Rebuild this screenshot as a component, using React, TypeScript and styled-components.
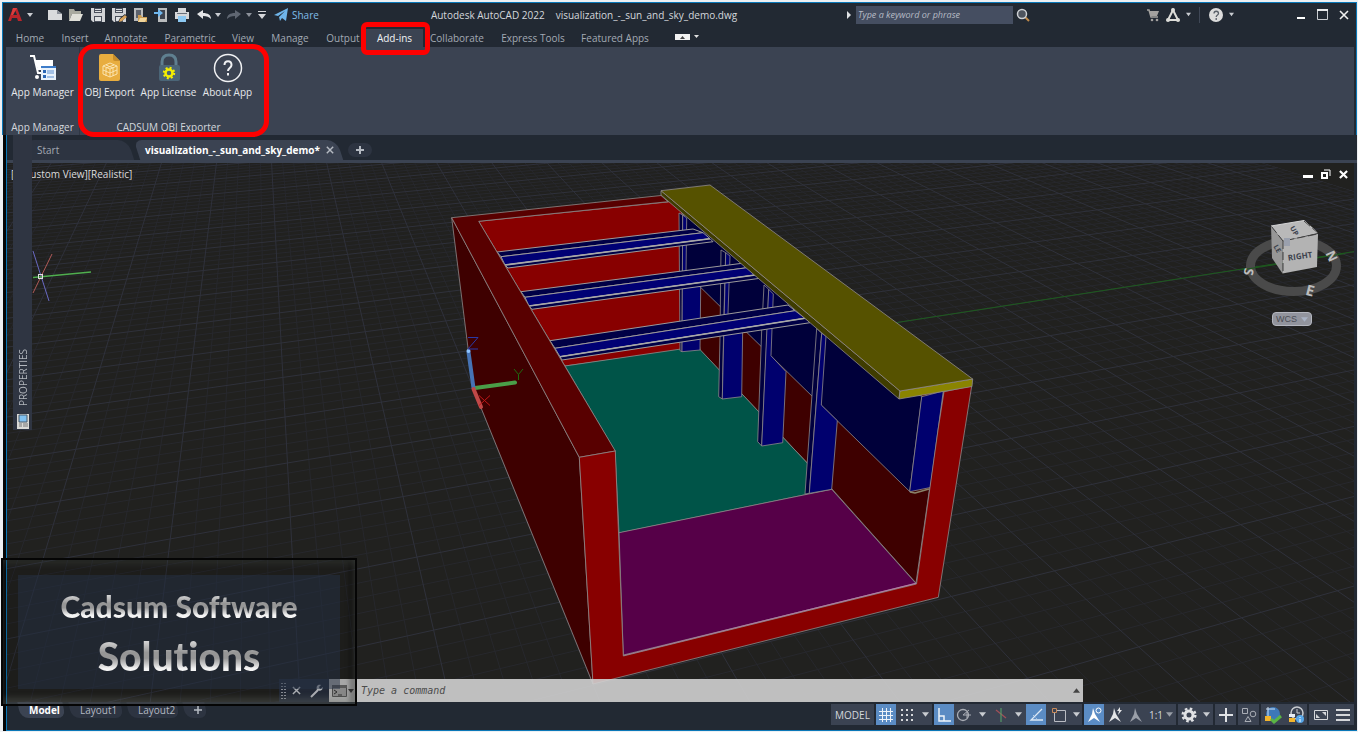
import React from "react";
import styled, { createGlobalStyle, css } from "styled-components";

const GlobalStyle = createGlobalStyle`
  * { box-sizing: border-box; }
  body { margin: 0; background: #fff; }
  button, input { font: inherit; color: inherit; margin: 0; }
`;

const c = {
  dark: "#222933",
  panel: "#3b4352",
  tab: "#2d3441",
  text: "#d4d7dc",
  dim: "#a3a9b3",
  blue: "#0a78b8",
  active: "#5b8cc4",
};

const Page = styled.div`
  position: relative;
  min-height: 100vh;
  display: flex;
  flex-direction: column;
  padding: 2px 1px 1px 2px;
  background: #eef0f3;
  color: ${c.text};
  font: 10px/16px "Open Sans", "Noto Sans", sans-serif;
`;

const Ribbon = styled.header`
  background: ${c.dark};
  border: 1px solid ${c.blue};
  border-bottom: 0;
`;

const TitleBar = styled.div`
  display: flex;
  align-items: center;
  height: 23px;
`;

const QuickAccess = styled.div`
  display: flex;
  align-items: center;
  width: 319px;
`;

const IconButton = styled.button<{ $w?: number; $ml?: number }>`
  display: flex;
  align-items: center;
  justify-content: center;
  flex: none;
  width: ${(p) => p.$w ?? 21}px;
  height: 20px;
  margin-left: ${(p) => p.$ml ?? 0}px;
  padding: 0;
  border: 0;
  background: none;
`;

const ShareButton = styled.button`
  display: flex;
  align-items: center;
  gap: 3px;
  margin-left: 2px;
  padding: 0;
  border: 0;
  background: none;
  color: #7fbce8;
`;

const Title = styled.h1`
  display: flex;
  justify-content: center;
  gap: 11px;
  flex: 1;
  margin: 0;
  font-size: 10px;
  font-weight: 400;
  white-space: nowrap;
`;

const TitleTools = styled.div`
  display: flex;
  align-items: center;
  flex: none;
  margin-right: 2px;
`;

const Search = styled.input`
  width: 157px;
  height: 18px;
  margin-left: 4px;
  padding: 0 2px;
  border: 0;
  border-radius: 0;
  background: #454e61;
  font-size: 9px;
  font-style: italic;
  &::placeholder { color: #b6bbc5; opacity: 1; }
`;

const Divider = styled.span`
  width: 1px;
  height: 16px;
  margin: 0 6px;
  background: #3f4756;
`;

const RibbonTabs = styled.nav`
  display: flex;
  align-items: flex-end;
  height: 21px;
  padding-left: 5px;
`;

const RibbonTab = styled.button<{ $w: number; $active?: boolean }>`
  width: ${(p) => p.$w}px;
  height: 18px;
  padding: 0;
  border: 0;
  white-space: nowrap;
  position: relative;
  background: ${(p) => (p.$active ? c.panel : "none")};
  color: ${(p) => (p.$active ? "#f1f3f5" : c.dim)};
`;

const Highlight = styled.span<{ $r: number; $inset: string }>`
  position: absolute;
  z-index: 6;
  inset: ${(p) => p.$inset};
  border: 5px solid #fe0000;
  border-radius: ${(p) => p.$r}px;
  pointer-events: none;
`;

const Panels = styled.div`
  display: flex;
  height: 88px;
  margin: 0 2px 0 3px;
  background: ${c.panel};
`;

const Panel = styled.section`
  position: relative;
  display: flex;
  flex-direction: column;
  justify-content: space-between;
  padding: 6px 0 0;
  border-right: 1px solid #303744;
  &:last-child { border-right: 0; }
`;

const PanelRow = styled.div`
  display: flex;
`;

const PanelTitle = styled.h2`
  margin: 0;
  font-size: 10px;
  font-weight: 400;
  text-align: center;
  white-space: nowrap;
`;

const BigButton = styled.button<{ $w: number }>`
  display: flex;
  flex-direction: column;
  align-items: center;
  gap: 1px;
  width: ${(p) => p.$w}px;
  padding: 0;
  border: 0;
  background: none;
  white-space: nowrap;
  color: #e6e8eb;
`;

const Main = styled.main`
  position: relative;
  display: flex;
  flex-direction: column;
  flex: 1;
  margin-left: 1px;
  border-left: 3px solid #050607;
  background: ${c.dark};
`;

const Frame = styled.div`
  display: flex;
  flex-direction: column;
  flex: 1;
  border-left: 1px solid ${c.blue};
  border-bottom: 1px solid ${c.blue};
`;

const FileTabs = styled.div`
  display: flex;
  align-items: flex-end;
  height: 28px;
  padding-left: 22px;
  border-bottom: 3px solid ${c.panel};
`;

const slant = css`
  position: relative;
  z-index: 0;
  border: 0;
  background: none;
  text-align: left;
  white-space: nowrap;
  &::before {
    content: "";
    position: absolute;
    z-index: -1;
    inset: 0 6px 0 0;
  }
`;

const FileTab = styled.button<{ $active?: boolean; $w: number }>`
  ${slant}
  display: flex;
  align-items: center;
  justify-content: space-between;
  width: ${(p) => p.$w}px;
  height: 20px;
  padding: 0 12px 0 8px;
  color: ${(p) => (p.$active ? "#fff" : c.dim)};
  font-weight: ${(p) => (p.$active ? 700 : 400)};
  &::before {
    background: ${(p) => (p.$active ? c.panel : c.tab)};
    border-radius: 8px 10px 0 0;
    transform: skewX(18deg);
  }
`;

const PlusTab = styled.button`
  width: 24px;
  height: 14px;
  margin: 0 0 3px 2px;
  padding: 0;
  border: 0;
  border-radius: 7px;
  background: ${c.tab};
  display: grid;
  place-items: center;
`;

const Viewport = styled.section`
  position: relative;
  display: flex;
  flex-direction: column;
  justify-content: space-between;
  flex: 1;
  margin-right: 3px;
  background: #21211f;
  overflow: hidden;
`;

const Scene = styled.svg`
  position: absolute;
  inset: 0;
  width: 100%;
  height: 100%;
`;

const ViewHeader = styled.div`
  position: relative;
  display: flex;
  justify-content: space-between;
  align-items: center;
  height: 22px;
  padding: 0 3px 0 4px;
`;

const ViewLabel = styled.span`
  color: #dcdcdc;
`;

const WindowButtons = styled.div`
  display: flex;
`;

const ViewCube = styled.svg`
  position: absolute;
  top: 48px;
  right: 5px;
`;

const WcsButton = styled.button`
  position: absolute;
  top: 149px;
  right: 42px;
  width: 40px;
  height: 14px;
  display: flex;
  align-items: center;
  justify-content: space-between;
  padding: 0 3px;
  border: 1px solid #b4b6be;
  border-radius: 4px;
  background: #92949d;
  color: #4b4d55;
  font: 9px/12px "Liberation Sans", sans-serif;
`;

const CommandLine = styled.div`
  position: relative;
  display: flex;
  height: 23px;
  margin: 0 271px 0 272px;
`;

const CommandTools = styled.div`
  display: flex;
  align-items: center;
  width: 50px;
  background: #272e3d;
`;

const CommandField = styled.label`
  display: flex;
  align-items: center;
  flex: 1;
  padding: 0 3px 0 2px;
  background: rgba(208, 208, 208, 0.9);
`;

const CommandInput = styled.input`
  flex: 1;
  min-width: 0;
  margin-left: 6px;
  padding: 0;
  border: 0;
  background: none;
  font: italic 10px/16px "DejaVu Sans Mono", monospace;
  &::placeholder { color: #4c4c4c; opacity: 1; }
`;

const Footer = styled.footer`
  display: flex;
  justify-content: space-between;
  height: 28px;
`;

const LayoutTabs = styled.div`
  display: flex;
  padding-left: 12px;
`;

const LayoutTab = styled.button<{ $active?: boolean; $w: number }>`
  ${slant}
  width: ${(p) => p.$w}px;
  height: 16px;
  padding: 0 0 0 10px;
  line-height: 16px;
  color: ${(p) => (p.$active ? "#fff" : "#b3b8c1")};
  font-weight: ${(p) => (p.$active ? 700 : 400)};
  &::before {
    background: ${(p) => (p.$active ? c.panel : c.tab)};
    border-radius: 0 0 8px 8px;
    transform: skewX(12deg);
  }
`;

const StatusBar = styled.div`
  display: flex;
  gap: 2px;
  height: 21px;
  margin: 2px 3px 0 0;
`;

const StatusGroup = styled.div`
  display: flex;
  background: ${c.panel};
`;

const StatusButton = styled.button<{ $w: number; $on?: boolean }>`
  display: flex;
  align-items: center;
  justify-content: center;
  gap: 3px;
  width: ${(p) => p.$w}px;
  padding: 0;
  border: 0;
  background: ${(p) => (p.$on ? c.active : "none")};
  white-space: nowrap;
`;

const Palette = styled.aside`
  position: absolute;
  z-index: 3;
  top: 0;
  left: 7px;
  width: 19px;
  height: 295px;
  display: flex;
  flex-direction: column;
  align-items: center;
  justify-content: flex-end;
  gap: 8px;
  background: #2f3542;
`;

const PaletteTitle = styled.span`
  writing-mode: vertical-rl;
  rotate: 180deg;
  line-height: 14px;
  color: #b3b7be;
`;

const Plaque = styled.div`
  position: absolute;
  z-index: 5;
  left: 1px;
  bottom: 26px;
  width: 356px;
  height: 148px;
  padding: 15px;
  border: 2px solid #050505;
  background: rgba(0, 0, 0, 0.12);
  box-shadow: inset 0 6px 6px -2px rgba(110, 125, 120, 0.16),
    inset 0 -6px 6px rgba(120, 125, 120, 0.3), inset -6px 0 4px rgba(0, 0, 0, 0.25);
  pointer-events: none;
`;

const PlaqueFace = styled.div`
  display: flex;
  flex-direction: column;
  align-items: center;
  height: 100%;
  padding-top: 10px;
  background: rgba(38, 50, 70, 0.5);
`;

const PlaqueText = styled.span<{ $size: number; $lh: number }>`
  font: 900 ${(p) => p.$size}px / ${(p) => p.$lh}px Lato, sans-serif;
  font-variant-ligatures: none;
  white-space: nowrap;
  background: linear-gradient(#d6d6d6 24%, #969696 44%, #969696 54%, #f4f4f4 72%);
  background-clip: text;
  -webkit-background-clip: text;
  color: transparent;
`;

const Caret = ({ size = 6, color = "#c9ccd1", up = false }: { size?: number; color?: string; up?: boolean }) => (
  <svg width={size} height={size} viewBox="0 0 6 6" aria-hidden="true">
    <path d={up ? "M0 5h6L3 1z" : "M0 1h6L3 5z"} fill={color} />
  </svg>
);

const Ico = ({ w = 16, h = 16, children }: { w?: number; h?: number; children: React.ReactNode }) => (
  <svg width={w} height={h} viewBox={`0 0 ${w} ${h}`} fill="none" aria-hidden="true">
    {children}
  </svg>
);

const Cross = ({ color = "#fff", w = 2, size = 10 }: { color?: string; w?: number; size?: number }) => (
  <svg width={size} height={size} viewBox="0 0 10 10" aria-hidden="true">
    <path d="M1 1l8 8M9 1l-8 8" stroke={color} strokeWidth={w} />
  </svg>
);

/* ---- perspective floor grid ---- */
const VA = { x: 3958, y: -150 };
const VB = { x: 255, y: -150 };

const gridLines = () => {
  const major: string[] = [];
  const minor: string[] = [];
  for (let i = -45; i <= 81; i++) {
    const k = 0.405 + (0.176 * i) / 5;
    const d = `M${(VB.x + k * 300).toFixed(1)} 150L${(VB.x + k * 880).toFixed(1)} 730`;
    (i % 5 === 0 ? major : minor).push(d);
  }
  for (let j = -80; j <= 50; j++) {
    const m = -6.478 + (0.49 * j) / 5;
    const at = (x: number) => (VA.y + (x - VA.x) / m).toFixed(1);
    (j % 5 === 0 ? major : minor).push(`M0 ${at(0)}L1358 ${at(1358)}`);
  }
  return { major: major.join(""), minor: minor.join("") };
};
const grid = gridLines();

const columns = [
  ["679,213 682.7,215 682,351.7 680,350.7", "682.7,215 686.7,218 686,274 700.7,287.7 700,350 682,351.7"],
  ["721,250 725.7,252.7 724,313 722.3,399 718.7,396.7 720,337", "725.7,252.7 730,256 728,313.3 742.7,328.3 741.7,396.7 722.3,399"],
  ["764,285 768.7,289.3 767.3,330 761.7,446 757.7,441.7 761.7,330", "768.7,289.3 773.3,294 771,355.7 786,371.7 782.7,442.7 761.7,446"],
  ["816.7,328.3 821.7,333.3 809.3,493.3 805,494", "821.7,333.3 826,336 821.3,405 837.3,420.7 831.7,489.3 809.3,493.3"],
];

const beams = [
  [497, 252, 693, 229, 501, 256.7, 703, 232.7, 505, 265, 710, 238.7, 508, 268, 713, 241.7],
  [521, 291.7, 742, 263.3, 525, 297.3, 747, 267.7, 529, 306, 755, 275, 532, 309.3, 760, 278.3],
  [550, 340.7, 788, 305, 555, 348.3, 795, 310.7, 560, 356.7, 805, 318.3, 562, 360, 810, 322.7],
];

const Drawing = () => (
  <Scene viewBox="7 163 1347 539" preserveAspectRatio="xMidYMid slice" role="img" aria-label="3D model of a building">
    <clipPath id="gridEdge">
      <path d="M-10 0H738L3095 732H-10z" />
    </clipPath>
    <g clipPath="url(#gridEdge)" fill="none">
      <path d={grid.minor} stroke="#27282d" />
      <path d={grid.major} stroke="#2f313b" />
    </g>
    <path d="M897 322.500L1358 251" stroke="#1d5a1d" />

    <g stroke="#8f8a8a" strokeWidth="0.8" strokeLinejoin="round">
      <polygon points="478.7,221.3 682,200.500 682,350 565,366" fill="#880000" />
      <polygon points="682,205 944,390 938,430 916,583 832,489 700,350" fill="#3e0000" />
      <polygon points="565,366 681,349 700,349.500 832,489.300 619,533 615,451" fill="#005448" />
      <polygon points="619,532.700 831.700,489.300 916,583.500 623.300,655" fill="#560048" />
      <path d="M623.300 656L916 583.500" stroke="#b878a8" strokeWidth="1.600" />
      <polygon points="684,210 900,392 922,396 909.700,491.500 701,287.700 684,271" fill="#00003a" />
      <polygon points="921.700,396.700 943.300,391 930.300,487.500 909.700,491.700" fill="#00006e" />
      <path d="M910 492l5 1 14-4" fill="none" stroke="#8a8268" strokeWidth="1.600" />
      {columns.map(([side, face]) => (
        <g key={side}>
          <polygon points={side} fill="#00003e" />
          <polygon points={face} fill="#00006e" />
        </g>
      ))}
      {beams.map((b) => (
        <g key={b[0]} stroke="#9c9a9a" strokeWidth="1">
          <polygon points={`${b[0]},${b[1]} ${b[2]},${b[3]} ${b[6]},${b[7]} ${b[4]},${b[5]}`} fill="#000046" />
          <polygon points={`${b[4]},${b[5]} ${b[6]},${b[7]} ${b[10]},${b[11]} ${b[8]},${b[9]}`} fill="#000074" />
          <polygon points={`${b[8]},${b[9]} ${b[10]},${b[11]} ${b[14]},${b[15]} ${b[12]},${b[13]}`} fill="#000046" />
          <path d={`M${b[8]} ${b[9]}L${b[10]} ${b[11]}`} stroke="#a8a8a8" strokeWidth="1.600" />
        </g>
      ))}
      <polygon points="451.700,217.700 579.300,457.300 593,684 473,388" fill="#3e0000" />
      <polygon points="451.700,217.700 661,195.500 668,201.700 478.700,221.300 615.300,451 579.300,457.300" fill="#580000" />
      <polygon
        points="579.300,457.300 615.300,451 623.300,656 916.500,584 938,430 944,391.700 971.700,386 938.300,597.300 593,684"
        fill="#880000"
      />
      <polygon points="661,190.700 900,391 899,399 661,195" fill="#3f3c00" />
      <polygon points="900,391 972.700,379 972,386.500 899,399" fill="#8a8400" />
      <polygon points="661,190.700 710,185 972.700,379 900,391" fill="#565200" />
    </g>

    <g strokeLinecap="round" strokeWidth="4">
      <path d="M475 388L515 382.500" stroke="#4a9e48" />
      <path d="M473.500 388L468.500 352" stroke="#4673b4" />
      <path d="M473.500 389L481 407" stroke="#c04848" />
    </g>
    <circle cx="468.500" cy="351" r="2" fill="#8ec4ff" />
    <g fill="none">
      <path d="M468 337.500h10l-10 11.500h10" stroke="#2a3aa8" />
      <path d="M514 369l4.500 5.500 4.500-5.500M518.500 374.500v5.500" stroke="#1f6a10" />
      <path d="M479 395.500l11 10M490 395.500l-11 10" stroke="#c01818" />
      <path d="M33 293L52 254" stroke="#b05a58" />
      <path d="M33 251l16 50" stroke="#6a6ac4" />
      <path d="M33 277.500L91 272" stroke="#4fae4f" strokeWidth="1.400" />
      <rect x="38.500" y="274.500" width="4" height="4" stroke="#dedede" />
    </g>
  </Scene>
);

const Cube = () => (
  <ViewCube width="112" height="100" viewBox="-4 0 112 100" aria-label="View cube">
    <g transform="translate(-1241 -210)">
      <ellipse cx="1293.500" cy="265" rx="43" ry="25.500" fill="none" stroke="#4a4a4a" strokeWidth="9" />
      <path d="M1241 269L1345 252.500" stroke="#1d5a1d" />
      <polygon points="1271,225 1304,219.500 1318,232 1283,240" fill="#b9b9b9" />
      <polygon points="1271,225 1283,240 1282.500,272.500 1272,257" fill="#979797" />
      <polygon points="1283,240 1318,233 1317,266 1282.500,272.500" fill="#b3b3b3" />
      <path d="M1271 225l33-5.500 14 12.500" fill="none" stroke="#d5d5d5" />
      <path d="M1271.500 225.500L1283 240l34.500-7M1283 240v32M1304 220l14 12" fill="none" stroke="#404040" strokeDasharray="8 3" />
      <rect x="1284" y="237" width="6" height="8" fill="#9aa0ad" />
      <g fill="#3d434e" fontFamily="Open Sans, sans-serif" fontWeight="700" textAnchor="middle">
        <text x="1300" y="258" fontSize="8" transform="rotate(-8 1300 255)">RIGHT</text>
        <text x="1294" y="232" fontSize="7" transform="rotate(60 1294 230)">UP</text>
        <text x="1277" y="250" fontSize="7" transform="rotate(60 1277 248)">LE</text>
      </g>
      <g fill="#bdbdbd" fontFamily="Open Sans, sans-serif" fontWeight="700" textAnchor="middle">
        <text x="1249" y="276" fontSize="13" transform="rotate(100 1249 271)">S</text>
        <text x="1310" y="295" fontSize="15" transform="rotate(14 1310 290)">E</text>
        <text x="1332" y="260" fontSize="13" transform="rotate(65 1332 255)">N</text>
      </g>
    </g>
  </ViewCube>
);

const floppy = (
  <>
    <path d="M1 1h14v14H3l-2-2z" fill="#d2d4d7" />
    <path d="M4 1h8v5H4zM4 9h8v6H4z" fill="#4a505c" />
    <path d="M5 2h6v1H5zM5 4h6v1H5zM5 10h6v4H5z" fill="#dfe1e3" />
  </>
);

const ribbonTabs: [string, number][] = [
  ["Home", 44], ["Insert", 46], ["Annotate", 56], ["Parametric", 72], ["View", 34], ["Manage", 60],
  ["Output", 46], ["Add-ins", 57], ["Collaborate", 68], ["Express Tools", 84], ["Featured Apps", 80],
];

const person = (fill: string, extra?: React.ReactNode) => (
  <Ico>
    <path d="M7 1l2 6 5 8-6-4-6 4 4-8z" fill={fill} />
    {extra}
  </Ico>
);

export default function App() {
  return (
    <Page>
      <GlobalStyle />
      <Ribbon>
        <TitleBar>
          <QuickAccess>
            <IconButton $w={24} aria-label="Application menu">
              <Ico><path d="M1 14L6 1h4l5 13h-4l-1-3H5l-1 3zM6 8h4L8 3z" fill="#b9252b" /><path d="M6 1h4L6 8H4z" fill="#dc3c3c" /></Ico>
            </IconButton>
            <Caret />
            <IconButton $ml={11} aria-label="New">
              <Ico><path d="M1 3h9l5 4v6H1z" fill="#d9dbdd" /><path d="M10 3v4h5z" fill="#8b9099" /></Ico>
            </IconButton>
            <IconButton $w={22} aria-label="Open">
              <Ico><path d="M1 14V2h5l1 2h6v3H4z" fill="#a9aa9f" /><path d="M4 7h11l-3 7H1z" fill="#e0e0d8" /></Ico>
            </IconButton>
            <IconButton aria-label="Save"><Ico>{floppy}</Ico></IconButton>
            <IconButton aria-label="Save as">
              <Ico>{floppy}<path d="M7 15l2-4 5-4 2 2-5 5z" fill={c.dark} /><path d="M8 15l1-3 5-4 2 2-5 4z" fill="#d9a45c" /></Ico>
            </IconButton>
            <IconButton $w={22} aria-label="Open from web">
              <Ico><path d="M2 1h9v13H2z" fill="#b9bbbd" /><path d="M4 3h5v8H4z" fill="#5b616c" /><path d="M6 15V8h3l1 2h5v5z" fill="#c99a52" /><path d="M8 11h7l-2 4H6z" fill="#f0d49a" /></Ico>
            </IconButton>
            <IconButton $w={20} aria-label="Save to mobile">
              <Ico><path d="M5 1h9v14H5z" fill="#b9bbbd" /><path d="M7 3h5v9H7z" fill="#3c4350" /><path d="M1 5h4V2l5 4-5 4V7H1z" fill="#6fb7ee" /></Ico>
            </IconButton>
            <IconButton $w={22} aria-label="Plot">
              <Ico><path d="M4 1h8v4H4zM1 5h14v7H1z" fill="#d5d7da" /><path d="M3 6h10v1H3z" fill="#6b717c" /><path d="M4 9h8v6H4z" fill="#8cc8f2" /></Ico>
            </IconButton>
            <IconButton $w={22} aria-label="Undo">
              <Ico><path d="M1 7l6-4v3c5 0 8 2 8 6-2-2-4-3-8-3v3z" fill="#e4e5e7" /></Ico>
            </IconButton>
            <Caret />
            <IconButton $w={25} aria-label="Redo">
              <Ico><path d="M15 7L9 3v3c-5 0-8 2-8 6 2-2 4-3 8-3v3z" fill="#5f6672" /></Ico>
            </IconButton>
            <Caret color="#8d929b" />
            <IconButton $w={20} aria-label="Customize">
              <Ico w={8} h={8}><path d="M0 0h8v1H0zM0 3h8L4 8z" fill="#d5d7da" /></Ico>
            </IconButton>
            <ShareButton>
              <Ico w={15}><path d="M0 8L14 1l-2 13-4-3-2 3-1-4 6-6-7 5z" fill="#6fb5ea" /></Ico>
              Share
            </ShareButton>
          </QuickAccess>
          <Title><span>Autodesk AutoCAD 2022</span><span>visualization_-_sun_and_sky_demo.dwg</span></Title>
          <TitleTools>
            <Ico w={6} h={8}><path d="M1 0v8l4-4z" fill="#e0e2e5" /></Ico>
            <Search placeholder="Type a keyword or phrase" aria-label="Search" />
            <IconButton $w={20} aria-label="Find">
              <Ico><path d="M10 10l4 4" stroke="#c08a4a" strokeWidth="2" /><circle cx="7" cy="7" r="4.500" stroke="#cdd0d4" strokeWidth="1.500" fill="#4e545e" /></Ico>
            </IconButton>
            <IconButton $ml={110} $w={20} aria-label="App store">
              <Ico><path d="M2 3h2l2 7h7" stroke="#a3a19f" strokeWidth="1.500" /><path d="M4 4h10l-2 5H6z" fill="#a3a19f" /><circle cx="7" cy="13" r="1.300" fill="#a3a19f" /><circle cx="12" cy="13" r="1.300" fill="#a3a19f" /></Ico>
            </IconButton>
            <IconButton $w={20} aria-label="Autodesk account">
              <Ico><path d="M8 3L3 13h10z" stroke="#dcdcd8" strokeWidth="2" /><circle cx="8" cy="3" r="2" fill="#dcdcd8" /><circle cx="3" cy="13" r="2" fill="#dcdcd8" /><circle cx="13" cy="13" r="2" fill="#dcdcd8" /></Ico>
            </IconButton>
            <IconButton $w={10} aria-label="Account menu"><Caret size={5} /></IconButton>
            <Divider />
            <IconButton $w={20} aria-label="Help">
              <Ico><circle cx="8" cy="8" r="7" fill="#dcdcdc" /><path d="M6 6.500c0-3 4.500-3 4.500 0 0 1.500-2.300 1.500-2.300 3.500M8.200 11v2" stroke="#5a6069" strokeWidth="1.300" /></Ico>
            </IconButton>
            <IconButton $w={11} aria-label="Help menu"><Caret size={5} /></IconButton>
            <IconButton $ml={53} aria-label="Minimize"><Ico><path d="M4 10h8v2H4z" fill="#fff" /></Ico></IconButton>
            <IconButton $w={22} aria-label="Maximize"><Ico><path d="M3.500 3.500h10v9h-10z" stroke="#c9ccd1" /><path d="M3 2h11v2H3z" fill="#e8eaec" /></Ico></IconButton>
            <IconButton aria-label="Close"><Cross w={1.6} color="#f0f0f0" /></IconButton>
          </TitleTools>
        </TitleBar>
        <RibbonTabs>
          {ribbonTabs.map(([label, w]) => (
            <RibbonTab key={label} $w={w} $active={label === "Add-ins"}>
              {label}
              {label === "Add-ins" && <Highlight $r={6} $inset="-7px -7px -8px -5px" />}
            </RibbonTab>
          ))}
          <IconButton $ml={15} $w={33} aria-label="Ribbon display">
            <Ico w={24} h={8}><path d="M0 1h15v6H0z" fill="#f2f2f2" /><path d="M5 6h5L7.500 3z" fill="#444" /><path d="M19 2h5l-2.500 3z" fill="#e0e0e0" /></Ico>
          </IconButton>
        </RibbonTabs>
        <Panels>
          <Panel>
            <BigButton $w={73}>
              <Ico w={30} h={30}>
                <path d="M2 3h4l4 17h8" stroke="#fff" strokeWidth="2" />
                <path d="M7 7h18v10H10z" fill="#fff" /><circle cx="9" cy="24" r="2" fill="#fff" />
                <path d="M13 13h15v14H13z" fill="#3d7cc9" /><path d="M13 15h15v12H13z" fill="#e9f2fb" />
                <path d="M15 17h3v3h-3zM15 22h3v3h-3z" fill="#2b66b4" /><path d="M19 18h7M19 20h7M19 24h7" stroke="#5c8fd0" />
              </Ico>
              App Manager
            </BigButton>
            <PanelTitle>App Manager</PanelTitle>
          </Panel>
          <Panel>
            <PanelRow>
              <BigButton $w={59}>
                <Ico w={30} h={30}>
                  <path d="M4 3q0-2 2-2h12l7 7v18q0 2-2 2H6q-2 0-2-2z" fill="#e8ad3f" /><path d="M18 1v5q0 2 2 2h5z" fill="#c78d2b" />
                  <path d="M15 10l7 3v8l-7 3-7-3v-8zM8 13l7 3 7-3M15 16v8M11 12l7 3v8M19 12l-8 3v8M8 17l7 3 7-3" stroke="#fbe3ae" strokeWidth="1" />
                </Ico>
                OBJ Export
              </BigButton>
              <BigButton $w={59}>
                <Ico w={30} h={30}>
                  <path d="M8 14V9q0-7 7-7t7 7v5" stroke="#5f7f90" strokeWidth="3" /><rect x="5" y="12" width="21" height="16" rx="2" fill="#4b6577" />
                  <circle cx="15" cy="20" r="3.500" stroke="#f6f000" strokeWidth="2.500" />
                  <circle cx="15" cy="20" r="5.200" stroke="#f6f000" strokeWidth="2" strokeDasharray="2 2.080" />
                </Ico>
                App License
              </BigButton>
              <BigButton $w={59}>
                <Ico w={30} h={30}>
                  <circle cx="15" cy="15" r="13.500" stroke="#f0f1f3" strokeWidth="1.500" />
                  <path d="M11.500 12c0-5 7-5 7 0 0 3-3.500 3-3.500 6M15 20v2.500" stroke="#f0f1f3" strokeWidth="2" />
                </Ico>
                About App
              </BigButton>
            </PanelRow>
            <PanelTitle>CADSUM OBJ Exporter</PanelTitle>
            <Highlight $r={16} $inset="-3px -12px -2px -2px" />
          </Panel>
        </Panels>
      </Ribbon>

      <Main>
        <Frame>
          <FileTabs>
            <FileTab $w={108}>Start</FileTab>
            <FileTab $active $w={209}>visualization_-_sun_and_sky_demo*<Cross size={8} w={1.8} color="#b5bac2" /></FileTab>
            <PlusTab aria-label="New tab"><Ico w={8} h={8}><path d="M4 0v8M0 4h8" stroke="#b5bac2" strokeWidth="2" /></Ico></PlusTab>
          </FileTabs>
          <Viewport>
            <Drawing />
            <ViewHeader>
              <ViewLabel>[-][Custom View][Realistic]</ViewLabel>
              <WindowButtons>
                <IconButton $w={18} aria-label="Minimize drawing"><Ico w={10} h={10}><path d="M0 6h10v3H0z" fill="#fff" /></Ico></IconButton>
                <IconButton $w={18} aria-label="Restore drawing"><Ico w={10} h={10}><path d="M1 4h5v5H1z" stroke="#fff" strokeWidth="2" /><path d="M3 1h6v6" stroke="#fff" /></Ico></IconButton>
                <IconButton $w={16} aria-label="Close drawing"><Cross size={9} w={2.4} /></IconButton>
              </WindowButtons>
            </ViewHeader>
            <Cube />
            <WcsButton>WCS<Caret size={7} color="#a9b2c4" /></WcsButton>
            <CommandLine>
              <CommandTools>
                <IconButton $w={10} aria-label="Move"><Ico w={6} h={16}><path d="M1 0v16M4 0v16" stroke="#9a9fa8" strokeWidth="2" strokeDasharray="1 2" /></Ico></IconButton>
                <IconButton $w={15} aria-label="Close command line"><Cross size={9} w={1.6} color="#c4c7cc" /></IconButton>
                <IconButton $w={25} aria-label="Command settings"><Ico w={14} h={14}><path d="M1 13l7-7" stroke="#c4c7cc" strokeWidth="2" /><path d="M13 3l-3 2-1-2 2-2c-4-1-5 2-4 5 3 2 6 0 6-3z" fill="#c4c7cc" /></Ico></IconButton>
              </CommandTools>
              <CommandField>
                <Ico w={24} h={14}><path d="M1.500 1.500h14v11h-14z" fill="#9b9b9b" stroke="#555" /><path d="M1 1h15v3H1z" fill="#666" /><path d="M3 6l3 2-3 2M7 11h4" stroke="#333" /><path d="M17 5h6l-3 4z" fill="#444" /></Ico>
                <CommandInput placeholder="Type a command" aria-label="Command" />
                <Caret color="#444" size={7} up />
              </CommandField>
            </CommandLine>
          </Viewport>
          <Footer>
            <LayoutTabs>
              <LayoutTab $active $w={51}>Model</LayoutTab>
              <LayoutTab $w={58}>Layout1</LayoutTab>
              <LayoutTab $w={56}>Layout2</LayoutTab>
              <LayoutTab $w={28} aria-label="New layout"><Ico w={8} h={8}><path d="M4 0v8M0 4h8" stroke="#b5bac2" strokeWidth="1.500" /></Ico></LayoutTab>
            </LayoutTabs>
            <StatusBar>
              <StatusGroup><StatusButton $w={43}>MODEL</StatusButton></StatusGroup>
              <StatusGroup>
                <StatusButton $w={20} $on aria-label="Grid"><Ico><path d="M4.500 1v14M8.500 1v14M12.500 1v14M1 4.500h14M1 8.500h14M1 12.500h14" stroke="#eef3f9" /></Ico></StatusButton>
                <StatusButton $w={22} aria-label="Snap"><Ico w={12} h={12}><path d="M1 0v12M6 0v12M11 0v12" stroke="#d5d7da" strokeWidth="2" strokeDasharray="2 3" /></Ico></StatusButton>
                <StatusButton $w={14} aria-label="Snap menu"><Caret size={7} /></StatusButton>
              </StatusGroup>
              <StatusGroup>
                <StatusButton $w={20} $on aria-label="Ortho"><Ico><path d="M3 1v13h12M3 9h5v5" stroke="#eef3f9" strokeWidth="1.500" /></Ico></StatusButton>
                <StatusButton $w={20} aria-label="Polar"><Ico><circle cx="7" cy="8" r="5.500" stroke="#a9adb5" strokeWidth="1.300" /><path d="M7 8h8M7 8l6-5M11 5v6" stroke="#a9adb5" /></Ico></StatusButton>
                <StatusButton $w={17} aria-label="Polar menu"><Caret size={7} /></StatusButton>
                <StatusButton $w={19} aria-label="Isometric"><Ico><path d="M3 3l10 8" stroke="#a25058" strokeWidth="1.300" /><path d="M8 1v14" stroke="#58a86b" /></Ico></StatusButton>
                <StatusButton $w={16} aria-label="Isometric menu"><Caret size={7} /></StatusButton>
                <StatusButton $w={20} $on aria-label="Tracking"><Ico><path d="M14 2L3 13h12" stroke="#dce8f5" strokeWidth="1.300" /><path d="M5 8l4 4" stroke="#dce8f5" strokeDasharray="1 1" /></Ico></StatusButton>
                <StatusButton $w={25} aria-label="Object snap"><Ico><path d="M3.500 3.500h11v11h-11z" stroke="#b9bcc3" /><path d="M1.500 1.500h4v4h-4z" fill={c.panel} stroke="#c98a5a" /></Ico></StatusButton>
                <StatusButton $w={11} aria-label="Object snap menu"><Caret size={7} /></StatusButton>
              </StatusGroup>
              <StatusGroup>
                <StatusButton $w={20} $on aria-label="Annotation visibility">{person("#fff", <circle cx="12.500" cy="3.500" r="2.500" stroke="#fff" />)}</StatusButton>
                <StatusButton $w={22} aria-label="Auto scale">{person("#e4e5e7", <path d="M13 0l-3 4h2l-1 4 4-5h-2z" fill="#e4e5e7" />)}</StatusButton>
                <StatusButton $w={20} aria-label="Annotation scale">{person("#9a9fa8")}</StatusButton>
                <StatusButton $w={30}>1:1<Caret color="#9a9fa8" size={7} /></StatusButton>
              </StatusGroup>
              <StatusGroup>
                <StatusButton $w={21} aria-label="Workspace"><Ico><circle cx="8" cy="8" r="4" stroke="#e0e2e5" strokeWidth="3" /><circle cx="8" cy="8" r="6.300" stroke="#e0e2e5" strokeWidth="2.500" strokeDasharray="2.500 2.450" /></Ico></StatusButton>
                <StatusButton $w={14} aria-label="Workspace menu"><Caret size={7} /></StatusButton>
              </StatusGroup>
              <StatusGroup><StatusButton $w={21} aria-label="Annotation monitor"><Ico><path d="M8 1v14M1 8h14" stroke="#e0e2e5" strokeWidth="2" /></Ico></StatusButton></StatusGroup>
              <StatusGroup><StatusButton $w={21} aria-label="Isolate"><Ico><path d="M1.500 1.500h5v5h-5zM4 14.500h6L7 9.500z" stroke="#a9adb5" /><circle cx="12" cy="7" r="2.800" stroke="#a9adb5" /></Ico></StatusButton></StatusGroup>
              <StatusGroup>
                <StatusButton $w={24} aria-label="Drawing status"><Ico w={18} h={18}><circle cx="9" cy="8" r="7" fill="#3d78b8" /><path d="M2 3h9M4 1v9" stroke="#cfe2f5" /><path d="M1 10h6v5H1z" fill="#f3b52c" /><path d="M7 13l3 3 7-6" stroke="#5ab545" strokeWidth="3" /></Ico></StatusButton>
                <StatusButton $w={22} aria-label="History"><Ico w={18} h={18}><circle cx="10" cy="7" r="6" stroke="#c9ccd1" strokeWidth="1.500" /><path d="M10 3v4h3" stroke="#c9ccd1" /><path d="M2 8h6v3H2z" fill="#e8eef5" /><path d="M2 12h6v4H2z" fill="#f3b52c" /><circle cx="13" cy="13" r="4" fill="#58a7e8" /><path d="M13 11v1M13 13v3" stroke="#fff" /></Ico></StatusButton>
              </StatusGroup>
              <StatusGroup>
                <StatusButton $w={23} aria-label="Clean screen"><Ico><path d="M1.500 3.500h13v9h-13z" stroke="#d5d7da" /><path d="M9 5h4v4zM3 7v4h4z" fill="#d5d7da" /></Ico></StatusButton>
                <StatusButton $w={22} aria-label="Customization"><Ico><path d="M1 3h14M1 8h14M1 13h14" stroke="#d5d7da" strokeWidth="2" /></Ico></StatusButton>
              </StatusGroup>
            </StatusBar>
          </Footer>
        </Frame>
        <Palette>
          <PaletteTitle>PROPERTIES</PaletteTitle>
          <Ico w={12} h={16}><path d="M0 0h12v15H0z" fill="#d9d9d6" /><path d="M2 1h8v7H2z" fill="#7fc0f0" stroke="#4a5a6a" /><path d="M2 10h3M2 12h3M6 10h5M6 12h5" stroke="#777" /></Ico>
        </Palette>
      </Main>

      <Plaque>
        <PlaqueFace>
          <PlaqueText $size={30} $lh={42}>Cadsum Software</PlaqueText>
          <PlaqueText $size={39} $lh={58}>Solutions</PlaqueText>
        </PlaqueFace>
      </Plaque>
    </Page>
  );
}
